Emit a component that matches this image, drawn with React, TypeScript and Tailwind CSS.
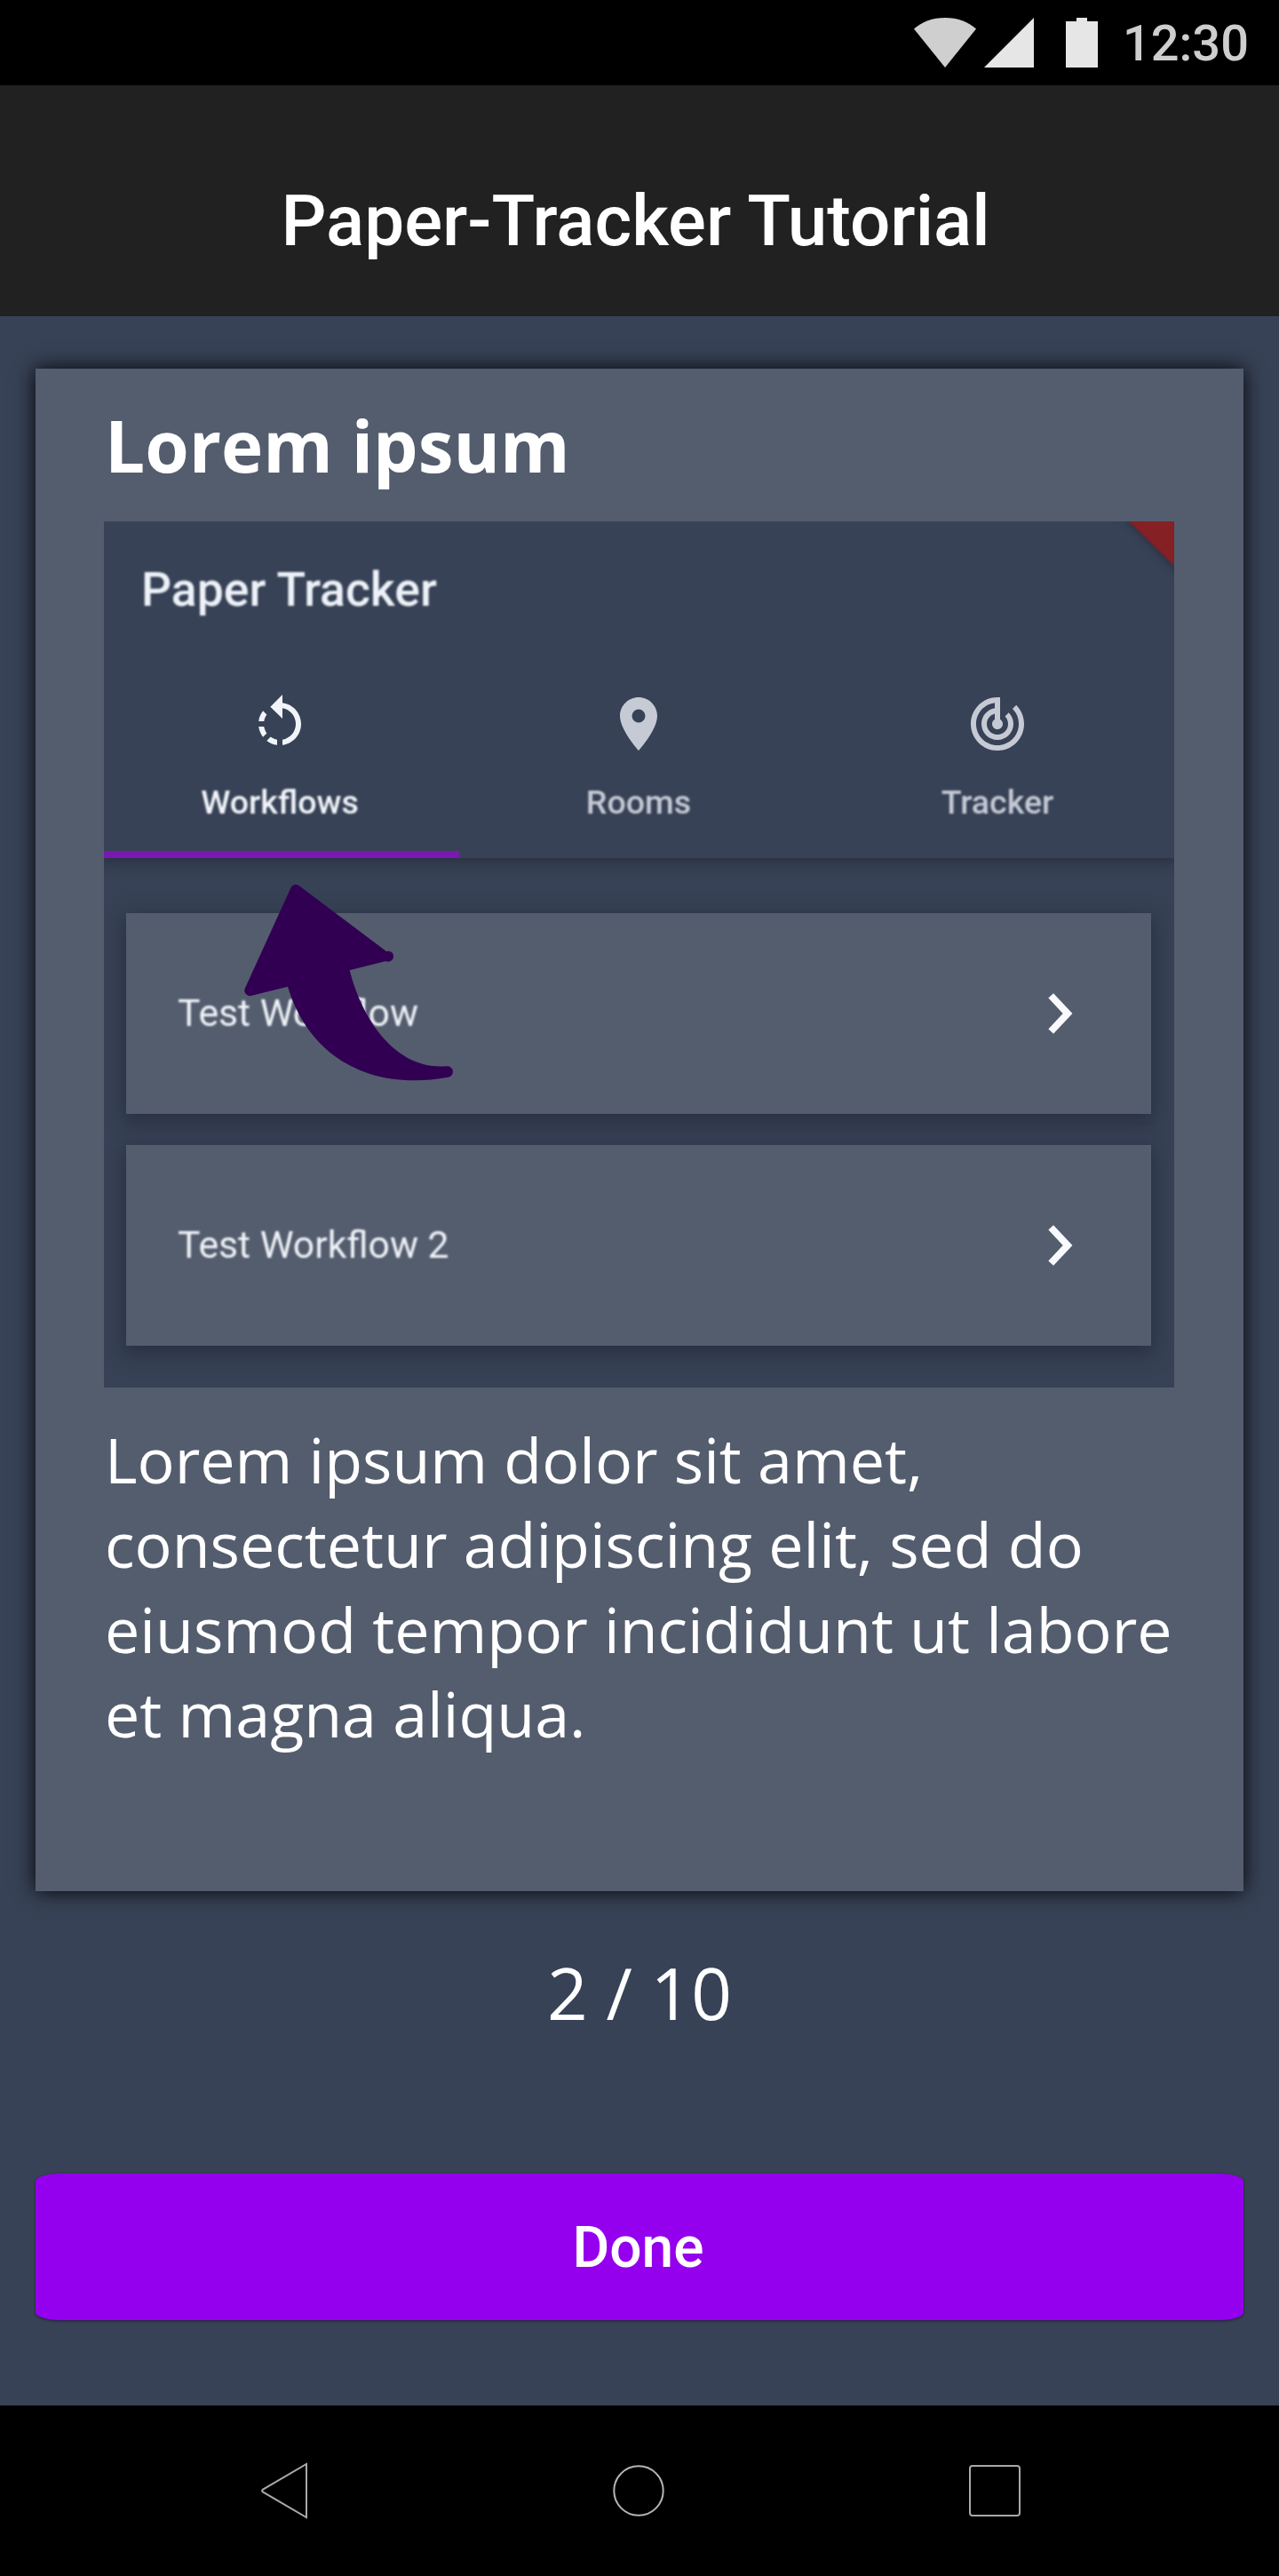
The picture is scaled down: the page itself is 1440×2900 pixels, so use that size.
import type { ReactNode } from "react";
import { MdPlace, MdRotateLeft, MdTrackChanges } from "react-icons/md";

function StatusBar() {
  return (
    <div className="flex h-24 items-start justify-end bg-black pr-[34px]">
      <svg className="mt-5 h-14 w-[70px]" viewBox="0 0 70 56">
        <path d="M35 56 0 12.5C9 4.5 21 0 35 0s26 4.5 35 12.5Z" fill="#cfcfcf" />
      </svg>
      <svg className="mt-5 ml-[9px] h-14 w-14" viewBox="0 0 56 56">
        <path d="M56 0v56H0Z" fill="#e6e6e6" />
      </svg>
      <svg className="mt-5 ml-9 h-14 w-9" viewBox="0 0 36 56">
        <path d="M12 0h12v4h12v52H0V4h12Z" fill="#e6e6e6" />
      </svg>
      <span className="mt-[17px] ml-[28px] font-['Roboto',sans-serif] text-[56px] leading-[64px] font-medium text-[#cecece]">
        12:30
      </span>
    </div>
  );
}

function Tab({ icon, label, active = false }: { icon: ReactNode; label: string; active?: boolean }) {
  return (
    <div
      className={
        active
          ? "flex h-[379px] w-[404px] shrink-0 flex-col items-center border-b-[8px] border-[#7a18b4] pt-[192px] text-[#f1f4f9]"
          : "flex h-[379px] w-[404px] shrink-0 flex-col items-center pt-[192px] text-[#c6cad5]"
      }
    >
      <div className="blur-[0.7px]">{icon}</div>
      <span className="mt-[30px] text-[37.6px] leading-[44px] font-medium blur-[0.8px]">{label}</span>
    </div>
  );
}

function Chevron() {
  return (
    <svg className="h-[46px] w-[28px] blur-[0.7px]" viewBox="0 0 28 46" fill="none" stroke="#f8fafd" strokeWidth="7.8">
      <path d="M3.2 2.8 22.1 23 3.2 43.2" />
    </svg>
  );
}

function WorkflowRow({ label }: { label: string }) {
  return (
    <div className="flex h-[226px] items-center justify-between bg-[#545d6e] pr-[88px] pl-[58px] shadow-[0_7px_20px_3px_rgba(36,38,56,0.65)]">
      <span className="pb-[2px] text-[42.7px] text-[#f0f3f8] blur-[0.8px]">{label}</span>
      <Chevron />
    </div>
  );
}

function AppPreview() {
  return (
    <div className="relative h-[975px] w-[1205px] overflow-hidden bg-[#374256] font-['Roboto',sans-serif]">
      <div className="relative -ml-[4px] w-[1212px] bg-[#374256] shadow-[0_4px_14px_rgba(20,24,34,0.45)]">
        <span className="absolute top-[46px] left-[46px] text-[53.5px] leading-[62px] font-medium text-[#eef2f8] blur-[0.8px]">
          Paper Tracker
        </span>
        <div className="flex">
          <Tab active icon={<MdRotateLeft className="size-[72px]" />} label="Workflows" />
          <Tab icon={<MdPlace className="size-[72px]" />} label="Rooms" />
          <Tab icon={<MdTrackChanges className="size-[72px]" />} label="Tracker" />
        </div>
      </div>
      <div className="mt-[62px] mr-[26px] ml-[25px] flex flex-col gap-[35px]">
        <WorkflowRow label="Test Workflow" />
        <WorkflowRow label="Test Workflow 2" />
      </div>
      <svg className="absolute top-0 right-0 h-[70px] w-[75px]" viewBox="0 0 75 70">
        <path d="M18 -4 80 60V-4Z" fill="#202838" opacity="0.6" className="blur-[4px]" />
        <path d="M22 -2 77 52V-2Z" fill="#852024" className="blur-[0.8px]" />
      </svg>
      <svg className="absolute top-[373px] left-[123px] h-[280px] w-[300px]" viewBox="0 0 900 840">
        <path
          d="M107 459 262 119A18 18 0 0 1 291 112L585 333A18 18 0 1 1 583 366L461 397C505 570 620 735 788 721A18 18 0 0 1 794 758C520 808 320 680 252 452L128 483A18 18 0 0 1 107 459Z"
          fill="#320052"
        />
      </svg>
    </div>
  );
}

function NavBar() {
  return (
    <div className="flex h-48 items-center justify-between bg-black pr-[290px] pl-[293px]">
      <svg className="h-[64px] w-[54px]" viewBox="0 0 54 64" fill="none" stroke="#a8a8a8" strokeWidth="2">
        <path d="M52 2v60L2.6 33.2q-1-1.2 0-2.4Z" />
      </svg>
      <svg className="size-[60px]" viewBox="0 0 60 60" fill="none" stroke="#b4b4b4" strokeWidth="2">
        <circle cx="30" cy="30" r="27.7" />
      </svg>
      <svg className="size-[60px]" viewBox="0 0 60 60" fill="none" stroke="#a8a8a8" strokeWidth="2">
        <rect x="2" y="2" width="56" height="56" rx="3" />
      </svg>
    </div>
  );
}

export default function App() {
  return (
    <div className="flex h-[2900px] w-[1440px] flex-col overflow-hidden bg-[#374256]">
      <StatusBar />
      <header className="flex h-[260px] items-center justify-center bg-[#212121] pt-[45px] pr-[9px]">
        <h1 className="font-['Roboto',sans-serif] text-[80px] leading-[94px] font-medium whitespace-nowrap text-white">
          Paper-Tracker Tutorial
        </h1>
      </header>
      <main className="flex grow flex-col px-10 pt-[59px] font-['Open_Sans',sans-serif] text-white">
        <section className="h-[1714px] bg-[#545d6e] pt-8 pr-[78px] pl-[77px] shadow-[0_0_22px_rgba(0,0,0,0.95)]">
          <h2 className="pl-[1px] text-[80px] leading-[108px] font-bold">Lorem ipsum</h2>
          <div className="mt-8">
            <AppPreview />
          </div>
          <p className="mt-[34px] pl-[1px] text-[70px] leading-[95.36px]">
            Lorem ipsum dolor sit amet, consectetur adipiscing elit, sed do eiusmod tempor incididunt ut labore et
            magna aliqua.
          </p>
        </section>
        <p className="mt-[60px] text-center text-[80px] leading-[108px]">2 / 10</p>
        <button className="mt-[150px] h-[165px] rounded-[26px/9px] bg-[#9400ee] pt-[3px] pr-[3px] font-['Roboto',sans-serif] text-[64px] font-medium shadow-[0_1px_3px_rgba(0,0,0,0.5)]">
          Done
        </button>
      </main>
      <NavBar />
    </div>
  );
}
